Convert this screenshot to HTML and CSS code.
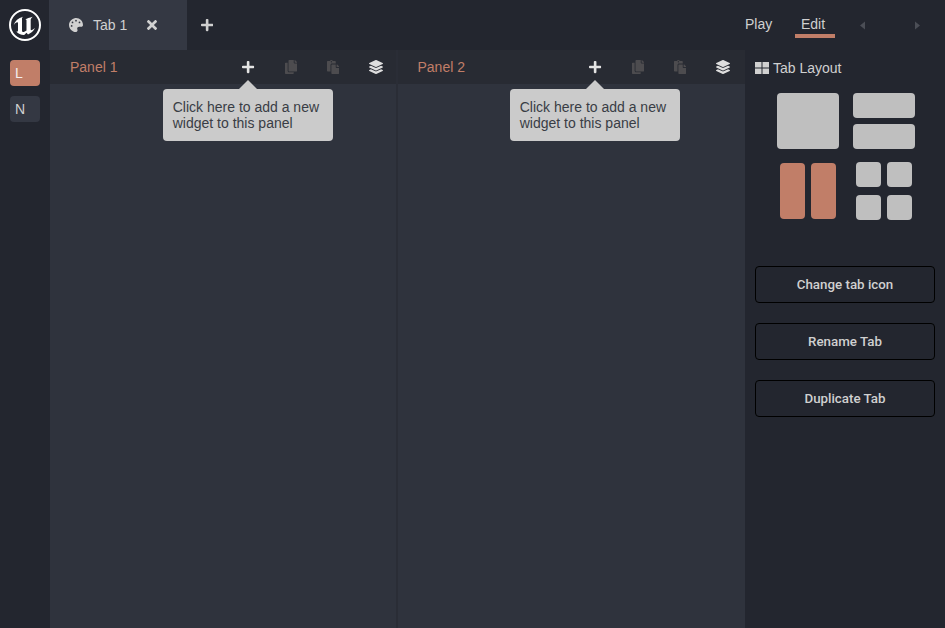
FILE: index.html
```html
<!DOCTYPE html>
<html lang="en">
<head>
<meta charset="utf-8">
<title>Tab 1</title>
<link rel="stylesheet" href="styles.css">
</head>
<body>
<svg class="defs" aria-hidden="true">
  <symbol id="plus" viewBox="0 0 448 512"><path d="M416 208H272V64c0-17.67-14.33-32-32-32h-32c-17.67 0-32 14.33-32 32v144H32c-17.67 0-32 14.33-32 32v32c0 17.67 14.33 32 32 32h144v144c0 17.67 14.33 32 32 32h32c17.67 0 32-14.33 32-32V304h144c17.67 0 32-14.33 32-32v-32c0-17.67-14.33-32-32-32z"/></symbol>
  <symbol id="layers" viewBox="0 0 512 512"><path d="M12.41 148.02l232.94 105.67c6.8 3.09 14.49 3.09 21.29 0l232.94-105.67c16.55-7.51 16.55-32.52 0-40.03L266.65 2.31a25.607 25.607 0 0 0-21.29 0L12.41 107.98c-16.55 7.51-16.55 32.53 0 40.04zm487.18 88.28l-58.09-26.33-161.64 73.27c-7.56 3.43-15.59 5.17-23.86 5.17s-16.29-1.74-23.86-5.17L70.51 209.97l-58.1 26.33c-16.55 7.5-16.55 32.5 0 40l232.94 105.59c6.8 3.08 14.49 3.08 21.29 0L499.59 276.3c16.55-7.5 16.55-32.5 0-40zm0 127.8l-57.87-26.23-161.86 73.37c-7.56 3.43-15.59 5.17-23.86 5.17s-16.29-1.74-23.86-5.17L70.29 337.87 12.41 364.1c-16.55 7.5-16.55 32.5 0 40l232.94 105.59c6.8 3.08 14.49 3.08 21.29 0L499.59 404.1c16.55-7.5 16.55-32.5 0-40z"/></symbol>
  <symbol id="copy" viewBox="0 0 448 512"><path d="M320 448v40c0 13.255-10.745 24-24 24H24c-13.255 0-24-10.745-24-24V120c0-13.255 10.745-24 24-24h72v296c0 30.879 25.121 56 56 56h168zm0-344V0H152c-13.255 0-24 10.745-24 24v368c0 13.255 10.745 24 24 24h272c13.255 0 24-10.745 24-24V128H344c-13.2 0-24-10.8-24-24zm120.971-31.029L375.029 7.029A24 24 0 0 0 358.059 0H352v96h96v-6.059a24 24 0 0 0-7.029-16.97z"/></symbol>
  <symbol id="paste" viewBox="0 0 448 512"><path d="M128 184c0-30.879 25.122-56 56-56h136V56c0-13.255-10.745-24-24-24h-80.61C204.306 12.89 183.637 0 160 0s-44.306 12.89-55.39 32H24C10.745 32 0 42.745 0 56v336c0 13.255 10.745 24 24 24h104V184zm32-144c13.255 0 24 10.745 24 24s-10.745 24-24 24-24-10.745-24-24 10.745-24 24-24zm184 248h104v200c0 13.255-10.745 24-24 24H184c-13.255 0-24-10.745-24-24V184c0-13.255 10.745-24 24-24h136v104c0 13.200 10.800 24 24 24zm104-38.059V256h-96v-96h6.059a24 24 0 0 1 16.970 7.029l65.941 65.941a24.002 24.002 0 0 1 7.030 16.971z"/></symbol>
</svg>
<div class="app">
  <header class="topbar">
    <svg class="logo" viewBox="0 0 34 34"><circle cx="17" cy="17" r="15" fill="none" stroke="#fff" stroke-width="2"/><path fill="#fff" d="M5.600 17.300C7 12.900 10.300 9.900 15 8.700 13.900 9.700 14 10.200 14 11.200V22.400C14 23.800 15.200 24.400 16.300 23.800L18.500 22.500V12.500C18.500 11.500 18 11.400 17.200 11.500C19.200 10.400 21 9.600 24.700 8.700C23.200 10 22.700 10.800 22.700 12V21.300C22.700 22.700 23.300 22.800 27 20.100C25.300 23.500 23 25.200 20 26.500L18.500 24.700 16.200 27C13 27.100 10.200 25.900 8.300 23.600C9.500 24 10 23.500 10 22.300V15.300C10 13 7.500 14.300 5.600 17.300Z"/></svg>
    <div class="tab">
      <svg class="palette" viewBox="0 0 512 512"><path fill-rule="evenodd" d="M204.300 5C104.900 24.400 24.800 104.300 5.200 203.400c-37 187 131.700 326.400 258.800 306.700 41.200-6.400 61.400-54.600 42.500-91.700-23.100-45.400 9.900-98.400 60.900-98.400h79.700c35.800 0 64.800-29.600 64.900-65.300C511.500 97.100 368.100-26.900 204.300 5zM96 320a32 32 0 1 1 0-64 32 32 0 0 1 0 64zm32-128a32 32 0 1 1 0-64 32 32 0 0 1 0 64zm128-64a32 32 0 1 1 0-64 32 32 0 0 1 0 64zm128 64a32 32 0 1 1 0-64 32 32 0 0 1 0 64z"/></svg>
      <span class="tab-name">Tab 1</span>
      <svg class="close" viewBox="0 0 352 352"><path transform="translate(0 -80)" d="M242.720 256l100.070-100.070c12.280-12.280 12.280-32.190 0-44.480l-22.240-22.240c-12.280-12.280-32.190-12.280-44.480 0L176 189.280 75.930 89.210c-12.280-12.280-32.190-12.280-44.480 0L9.210 111.450c-12.280 12.280-12.280 32.190 0 44.480L109.280 256 9.210 356.070c-12.280 12.280-12.280 32.190 0 44.480l22.240 22.240c12.280 12.280 32.200 12.280 44.480 0L176 322.720l100.070 100.070c12.280 12.280 32.200 12.280 44.480 0l22.240-22.240c12.280-12.280 12.280-32.190 0-44.480L242.720 256z"/></svg>
    </div>
    <svg class="new-tab"><use href="#plus"/></svg>
    <nav class="modes">
      <span class="mode">Play</span>
      <span class="mode active">Edit</span>
      <svg class="caret" viewBox="0 0 5 8"><path d="M5 0v8L0 4z"/></svg>
      <svg class="caret next" viewBox="0 0 5 8"><path d="M0 0v8l5-4z"/></svg>
    </nav>
  </header>
  <div class="main">
    <aside class="screens">
      <div class="screen current">L</div>
      <div class="screen">N</div>
    </aside>
    <section class="panel first">
      <div class="panel-head">
        <span class="panel-name">Panel 1</span>
        <div class="tools">
          <div class="add"><svg class="plus"><use href="#plus"/></svg><div class="tip">Click here to add a new widget to this panel</div></div>
          <svg class="tool off"><use href="#copy"/></svg>
          <svg class="tool off"><use href="#paste"/></svg>
          <svg class="tool stack"><use href="#layers"/></svg>
        </div>
      </div>
    </section>
    <section class="panel">
      <div class="panel-head">
        <span class="panel-name">Panel 2</span>
        <div class="tools">
          <div class="add"><svg class="plus"><use href="#plus"/></svg><div class="tip">Click here to add a new widget to this panel</div></div>
          <svg class="tool off"><use href="#copy"/></svg>
          <svg class="tool off"><use href="#paste"/></svg>
          <svg class="tool stack"><use href="#layers"/></svg>
        </div>
      </div>
    </section>
    <aside class="props">
      <h2 class="title"><svg class="grid-icon" viewBox="0 0 14 12"><path d="M0 0h6.500v5.500H0zM7.500 0H14v5.500H7.500zM0 6.500h6.500V12H0zM7.500 6.500H14V12H7.500z"/></svg>Tab Layout</h2>
      <div class="layouts">
        <div class="layout single"><i></i></div>
        <div class="layout rows"><i></i><i></i></div>
        <div class="layout cols"><i></i><i></i></div>
        <div class="layout quad"><i></i><i></i><i></i><i></i></div>
      </div>
      <div class="actions">
        <button>Change tab icon</button>
        <button>Rename Tab</button>
        <button>Duplicate Tab</button>
      </div>
    </aside>
  </div>
</div>
</body>
</html>
```
FILE: styles.css
```css
* { box-sizing: border-box; }
body {
  margin: 0;
  background: #23262f;
  color: #d0d0d0;
  font: 14px/16px "Liberation Sans", Arial, sans-serif;
}
svg { display: block; flex: none; fill: currentColor; }
.defs { display: none; }
.app { height: 628px; display: flex; flex-direction: column; overflow: hidden; }
.topbar { height: 50px; display: flex; align-items: center; }
.logo { width: 34px; height: 34px; margin: 0 7px 0 8px; }
.tab {
  width: 138px;
  height: 50px;
  padding-left: 20px;
  display: flex;
  align-items: center;
  background: #343843;
}
.palette { width: 14px; height: 14px; }
.tab-name { width: 54px; margin-left: 10px; }
.close { width: 10px; height: 10px; }
.new-tab { width: 12.250px; height: 14px; margin-left: 14px; }
.modes { margin-left: auto; width: 200px; height: 50px; display: flex; align-items: center; }
.mode { width: 28px; height: 26px; padding-top: 4px; }
.mode.active {
  width: 40px;
  margin-left: 22px;
  padding-left: 6px;
  border-bottom: 4px solid #c17e68;
}
.caret { width: 5px; height: 9px; margin-left: 25px; color: #4b4e56; }
.caret.next { margin-left: 50px; }
.main { flex: 1; display: grid; grid-template-columns: 50px 347.500px 347.500px 200px; }
.screens { padding: 10px; display: flex; flex-direction: column; gap: 10px; }
.screen { height: 26px; padding: 5px; border-radius: 4px; background: #343843; }
.screen.current { background: #c17e68; color: #f4eeee; }
.panel { background: #2f333d; }
.panel.first { border-right: 2px solid #2a2d36; }
.panel-head {
  height: 34px;
  padding: 0 15px 0 20px;
  display: flex;
  align-items: center;
  justify-content: space-between;
  background: #282b33;
}
.panel.first .panel-head { padding-right: 12.500px; }
.panel-name { color: #c17e68; }
.tools { display: flex; align-items: center; }
.add { position: relative; margin-right: 30px; color: #e4e4e4; }
.plus { width: 12.250px; height: 14px; }
.tip {
  position: absolute;
  z-index: 1;
  top: 29px;
  left: -79px;
  width: 170px;
  height: 52px;
  padding: 10px 0 0 9.500px;
  border-radius: 4px;
  background: #cbcbcb;
  color: #393d45;
}
.tip::before {
  content: "";
  position: absolute;
  left: 76px;
  top: -9px;
  border: 9px solid transparent;
  border-top: 0;
  border-bottom-color: #cbcbcb;
}
.tool { width: 12.250px; height: 14px; margin-right: 30px; }
.off { color: #4d4c4f; }
.stack { width: 14px; margin-right: 0; color: #dedede; }
.props { padding: 10px; }
.title { margin: 0; display: flex; align-items: center; gap: 4px; font-size: inherit; font-weight: 400; }
.grid-icon { width: 14px; height: 12px; }
.layouts {
  margin: 17px 0 0 22px;
  display: grid;
  grid-template-columns: 62px 62px;
  gap: 14px;
  row-gap: 13px;
}
.layout { display: grid; gap: 6px; height: 56px; }
.layout i { border-radius: 4px; background: #bfbfbf; }
.rows { grid-template-rows: 25px 25px; }
.cols, .quad { grid-template-columns: 25px 25px; padding-left: 3px; }
.cols { margin-top: 1px; }
.cols i { background: #c17e68; }
.quad { grid-template-rows: 25px 25px; row-gap: 8px; }
.actions { margin-top: 47px; display: flex; flex-direction: column; gap: 20px; }
.actions button {
  height: 37px;
  padding: 0;
  border: 1px solid #000;
  border-radius: 4px;
  background: none;
  color: #d0d0d0;
  font: 500 13.330px Roboto, sans-serif;
}
```
